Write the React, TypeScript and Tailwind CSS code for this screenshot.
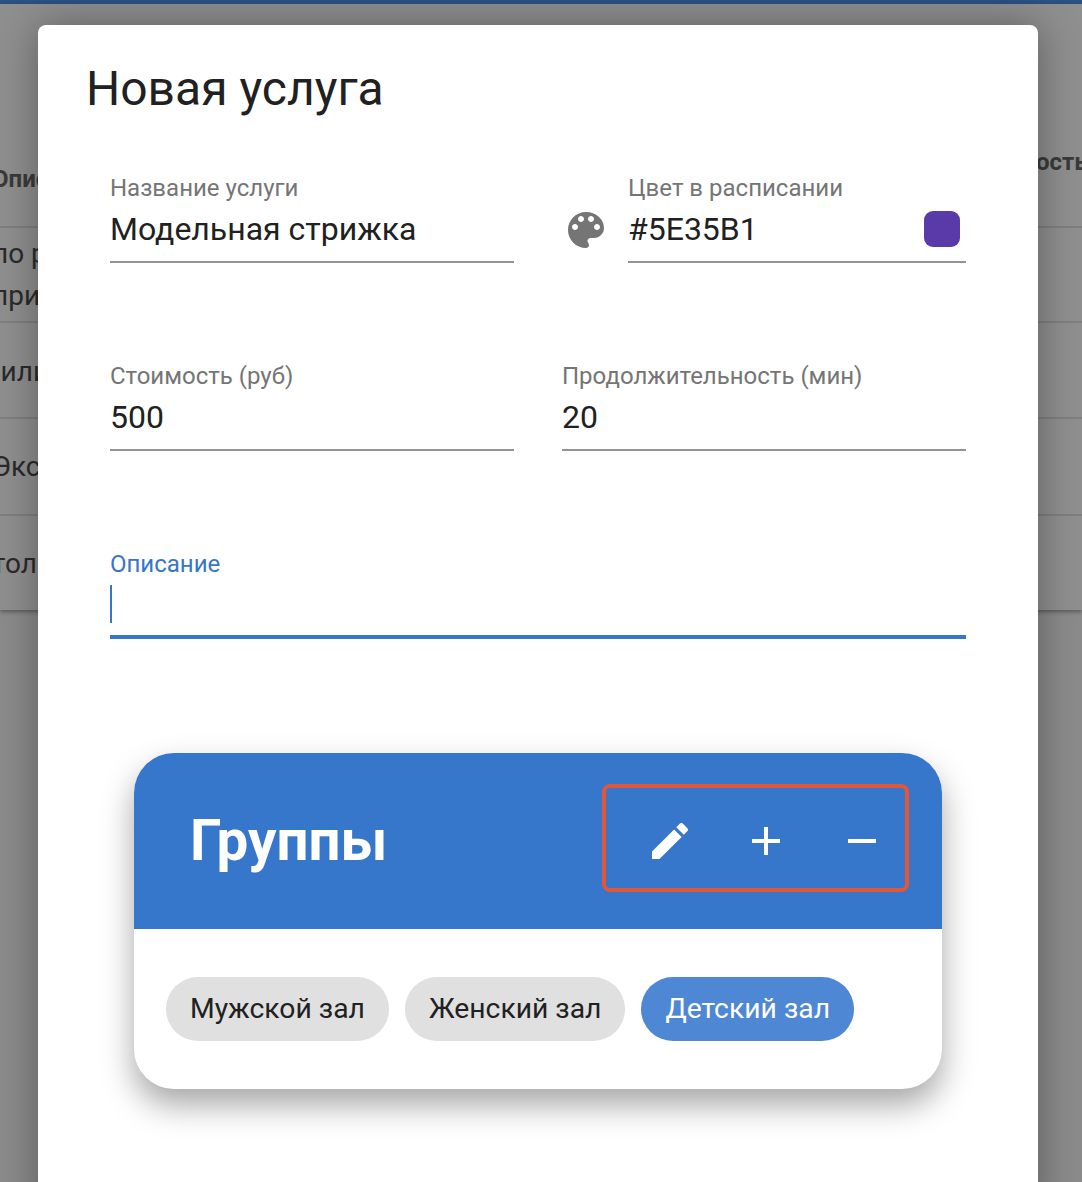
const Label = ({ children, active }: { children: React.ReactNode; active?: boolean }) => (
  <div className={`text-[24px] leading-[28px] pt-[3px] ${active ? "text-[#3676cb]" : "text-[#757575]"}`}>{children}</div>
);

const Field = ({ label, value, className }: { label: string; value: string; className?: string }) => (
  <div className={`border-b-2 border-[#949494] h-[92px] ${className ?? ""}`}>
    <Label>{label}</Label>
    <div className="text-[32px] leading-[38px] mt-[8px] text-[#212121]">{value}</div>
  </div>
);

const Icon = ({ d, className }: { d: string; className: string }) => (
  <svg viewBox="0 0 24 24" className={className} fill="currentColor">
    <path d={d} />
  </svg>
);

const Chip = ({ label, active }: { label: string; active?: boolean }) => (
  <div
    className={`h-16 rounded-full px-6 flex items-center text-[28.3px] ${
      active ? "bg-[#4e87d3] text-white" : "bg-[#e0e0e0] text-[#212121]"
    }`}
  >
    {label}
  </div>
);

const rows = [
  { h: "h-[95px]", offset: "-ml-[8px]", lines: ["по работе", "при заказе"] },
  { h: "h-[96px] pt-[4px]", offset: "-ml-[21px]", lines: ["Филировка"] },
  { h: "h-[97px]", offset: "-ml-[8px]", lines: ["Экспресс"] },
  { h: "h-[94px] pt-[2px]", offset: "-ml-[8px]", lines: ["только"] },
];

export default function App() {
  return (
    <div className="relative w-[1082px] h-[1182px] overflow-hidden bg-[#8b8b8b] font-['Roboto',sans-serif]">
      {/* page behind the dialog */}
      <div className="h-1 bg-[#2c5282] shadow-[0_4px_16px_rgba(0,0,0,0.4)]" />
      <div className="h-[606px] bg-[#8f8f8f] shadow-[0_2px_4px_rgba(0,0,0,0.35)]">
        <div className="h-[224px] border-b-2 border-[#7f7f7f] relative">
          <span className="absolute left-[-8px] top-[157px] text-[24px] font-bold text-[#3a3a3a]">Описание</span>
          <span className="absolute left-[1036px] top-[140px] text-[24px] font-bold text-[#3a3a3a] whitespace-nowrap">ость</span>
        </div>
        {rows.map((r) => (
          <div key={r.lines[0]} className={`${r.h} border-b-2 border-[#7f7f7f] last:border-b-0 flex flex-col justify-center text-[28px] leading-[42px] text-[#2a2a2a] whitespace-nowrap`}>
            {r.lines.map((l) => (
              <div key={l} className={r.offset}>{l}</div>
            ))}
          </div>
        ))}
      </div>

      {/* dialog */}
      <div className="absolute left-[38px] top-[25px] w-[1000px] h-[1200px] bg-white rounded-lg shadow-[0_0_40px_rgba(0,0,0,0.35)]">
        <h2 className="pl-[48px] pt-[35px] text-[48px] leading-[58px] text-[#212121]">Новая услуга</h2>

        <div className="px-[72px] pt-[53px]">
          <div className="flex">
            <Field label="Название услуги" value="Модельная стрижка" className="w-[404px]" />
            <div className="w-[114px] flex justify-center pl-[30px] pt-[35px]">
              <Icon
                className="w-12 h-12 text-[#757575]"
                d="M12 3c-4.97 0-9 4.03-9 9s4.03 9 9 9c.83 0 1.5-.67 1.5-1.5 0-.39-.15-.74-.39-1.01-.23-.26-.38-.61-.38-.99 0-.83.67-1.5 1.5-1.5H16c2.76 0 5-2.24 5-5 0-4.42-4.03-8-9-8zm-5.5 9c-.83 0-1.5-.67-1.5-1.5S5.67 9 6.5 9 8 9.67 8 10.5 7.33 12 6.5 12zm3-4C8.67 8 8 7.33 8 6.5S8.67 5 9.5 5s1.5.67 1.5 1.5S10.33 8 9.5 8zm5 0c-.83 0-1.5-.67-1.5-1.5S13.67 5 14.5 5s1.5.67 1.5 1.5S15.33 8 14.5 8zm3 4c-.83 0-1.5-.67-1.5-1.5S16.67 9 17.5 9s1.5.67 1.5 1.5-.67 1.5-1.5 1.5z"
              />
            </div>
            <div className="relative w-[338px]">
              <Field label="Цвет в расписании" value="#5E35B1" />
              <div className="absolute right-[6px] top-[40px] w-9 h-9 rounded-[9px] bg-[#5a3aa9]" />
            </div>
          </div>

          <div className="flex gap-12 mt-[96px]">
            <Field label="Стоимость (руб)" value="500" className="w-[404px]" />
            <Field label="Продолжительность (мин)" value="20" className="w-[404px]" />
          </div>

          <div className="mt-[96px] border-b-4 border-[#3676cb] h-[92px]">
            <Label active>Описание</Label>
            <div className="w-0.5 h-[38px] mt-[7px] bg-[#3676cb]" />
          </div>
        </div>

        {/* groups card */}
        <div className="ml-[96px] mt-[114px] w-[808px] rounded-[40px] bg-white shadow-[0_16px_32px_rgba(0,0,0,0.35)] overflow-hidden">
          <div className="h-[176px] bg-[#3676cb] flex items-center justify-between pl-[56px] pr-[33px] text-white">
            <div className="text-[56.5px] font-bold">Группы</div>
            <div className="w-[307px] h-[108px] mb-[6px] pt-[6px] pl-[20px] border-4 border-[#e2563a] rounded-lg flex items-center justify-center gap-12">
              <Icon className="w-12 h-12" d="M3 17.25V21h3.75L17.81 9.94l-3.75-3.75L3 17.25zM20.71 7.04c.39-.39.39-1.02 0-1.41l-2.34-2.34c-.39-.39-1.02-.39-1.41 0l-1.83 1.83 3.75 3.75 1.83-1.83z" />
              <Icon className="w-12 h-12" d="M19 13h-6v6h-2v-6H5v-2h6V5h2v6h6v2z" />
              <Icon className="w-12 h-12" d="M19 13H5v-2h14v2z" />
            </div>
          </div>
          <div className="flex gap-4 px-8 pt-12 pb-12">
            <Chip label="Мужской зал" />
            <Chip label="Женский зал" />
            <Chip label="Детский зал" active />
          </div>
        </div>
      </div>
    </div>
  );
}
